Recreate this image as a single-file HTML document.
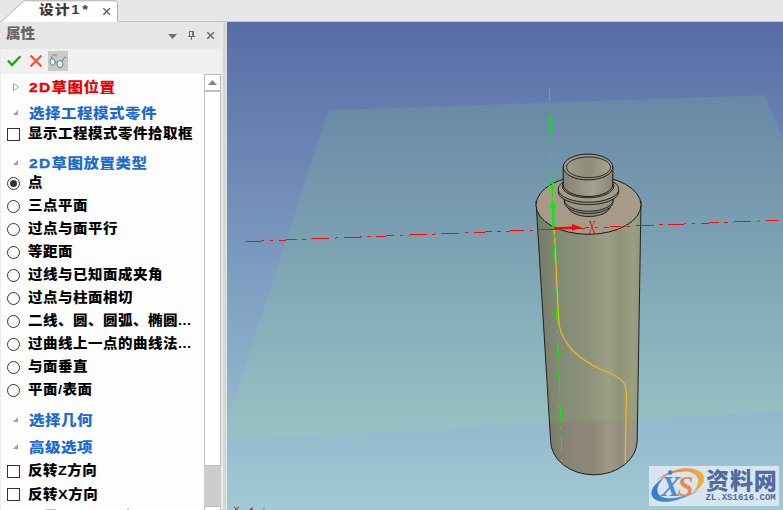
<!DOCTYPE html>
<html lang="zh-CN">
<head>
<meta charset="utf-8">
<title>设计1</title>
<style>
html,body{margin:0;padding:0;}
html{width:783px;height:510px;overflow:hidden;}
body{width:783px;height:510px;overflow:hidden;background:#e6e6e6;position:relative;
 font-family:"Liberation Sans","Noto Sans CJK SC",sans-serif;font-size:15px;font-weight:900;color:#000;}
div,span{position:absolute;box-sizing:border-box;white-space:nowrap;}
#topbar{left:0;top:0;width:783px;height:22px;background:#e7e7e7;border-bottom:1px solid #c6c6c6;}
#tabtxt{left:38.8px;top:0px;height:21px;line-height:19.6px;font-size:12.8px;color:#3a3a3a;letter-spacing:0.9px;transform-origin:0 50%;transform:scaleX(1.15);}
#phead{left:0;top:22px;width:221px;height:27px;background:#e6e6e6;}
#ptitle{left:5.8px;top:21.3px;height:26px;line-height:25px;font-size:14px;color:#666;font-weight:900;transform-origin:0 50%;transform:scaleX(1.04);}
#tool{left:0;top:49px;width:221px;height:25px;background:#f0f0f0;}
#glassbg{left:48px;top:51px;width:20px;height:20px;background:#c9c9c9;}
#tree{left:1px;top:74px;width:203px;height:436px;background:#fff;overflow:hidden;}
#leftedge{left:0;top:49px;width:1px;height:461px;background:#ececec;}
.row{left:0;width:203px;height:23px;line-height:22px;}
.row::before{content:"";position:absolute;left:1px;top:1px;width:196px;height:21px;background:#fdfdfe;}
.row .t{left:27.3px;top:0px;font-size:13.4px;transform-origin:0 50%;transform:scaleX(1.08);letter-spacing:0.49px;}
.hd .t{left:28.2px;top:0.5px;transform:scaleX(1.157);letter-spacing:0.43px;}
.la{position:static;letter-spacing:1.2px;-webkit-text-stroke:0.4px currentColor;}
.red{color:#f00000;}
.blue{color:#1c6ad4;}
.cb{left:6px;top:5px;width:13px;height:13px;border:1px solid #333;background:#fff;}
.rb{left:6px;top:5px;width:13px;height:13px;border:1px solid #333;border-radius:50%;background:#fff;}
.rb.on::after{content:"";position:absolute;left:2px;top:2px;width:7px;height:7px;border-radius:50%;background:#333;}
#sb{left:204px;top:74px;width:17px;height:436px;background:#cdcdcd;overflow:hidden;}
#sbup{left:0;top:0;width:17px;height:17px;background:#fff;border:1px solid #bdbdbd;}
#sbthumb{left:0;top:17px;width:17px;height:375px;background:#fff;border:1px solid #bdbdbd;}
#sbdn{left:0;top:432px;width:17px;height:18px;background:#fff;border:1px solid #bdbdbd;}
#split{left:221px;top:22px;width:6px;height:488px;background:linear-gradient(to right,#eaeaea 0,#eaeaea 2px,#d6d6d6 2.5px,#d6d6d6 4.7px,#e2e2e2 5.2px,#e2e2e2 6px);}
#view{left:227px;top:22px;width:556px;height:488px;overflow:hidden;background:#5a6ea6;}
svg{position:absolute;left:0;top:0;}
#wm{left:649px;top:466px;width:129.500px;height:39.500px;background:#d6e6ee;overflow:hidden;}
#wmcn{left:57px;top:1px;font-size:23px;line-height:28px;color:#526a9c;font-weight:900;letter-spacing:0.9px;}
#wmen{left:56.500px;top:26.700px;font-family:"Liberation Mono",monospace;font-size:9px;line-height:10px;color:#526a9c;font-weight:700;}
</style>
</head>
<body>
<div id="topbar"></div>
<svg width="783" height="510" viewBox="0 0 783 510" style="z-index:1;pointer-events:none">
  <path d="M1.5 21.5 L24 0.8 H115 Q117.5 0.8 117.5 3.5 V21.5" fill="#fff" stroke="#b0b0b0" stroke-width="1"/>
  <rect x="2" y="21" width="115" height="1" fill="#fff"/>
  <path d="M103.400 8.300 L109.900 14.800 M109.900 8.300 L103.400 14.800" stroke="#666" stroke-width="1.600" fill="none"/>
</svg>
<div id="tabtxt" style="z-index:2">设计<span style="position:static;margin-left:0.7px;letter-spacing:2.3px">1*</span></div>

<div id="phead"></div>
<div id="ptitle">属性</div>
<div id="tool"></div>
<div id="glassbg"></div>
<div id="leftedge"></div>
<svg width="221" height="80" viewBox="0 0 221 80" style="z-index:2">
  <path d="M168 34 H177 L172.5 39 Z" fill="#6e6e6e"/>
  <path d="M189 31.500 H194 M189.500 31.500 V36.500 M188 36.500 H195.200 M191.500 36.500 V40" stroke="#6e6e6e" stroke-width="1.100" fill="none"/>
  <path d="M193.100 31 V36.500" stroke="#6e6e6e" stroke-width="1.900" fill="none"/>
  <path d="M207.300 32.200 L213.900 38.800 M213.900 32.200 L207.300 38.800" stroke="#6e6e6e" stroke-width="1.600" fill="none"/>
  <path d="M8 60.600 L12 65 L20.300 56.300" stroke="#1aa51a" stroke-width="2.300" fill="none"/>
  <path d="M30.500 55.500 L41.500 66.500 M41.500 55.500 L30.500 66.500" stroke="#f6502c" stroke-width="2.100" fill="none"/>
  <g stroke="#66787a" stroke-width="0.9" fill="#e2f8f8">
    <ellipse cx="52.600" cy="62" rx="2.500" ry="3.300" transform="rotate(-15 52.600 62)"/>
    <ellipse cx="60" cy="64" rx="2.900" ry="3.600" transform="rotate(-15 60 64)"/>
    <path d="M50.700 59.500 Q52.500 54 55.700 54.800 Q56.500 55.300 56 56.500 M62.500 61.500 Q63 57.500 65 57 Q66 57 65.800 58.500 M55 62 Q56.300 61.200 57.200 62.500" fill="none"/>
  </g>
</svg>

<div id="tree">
  <div class="row hd" style="top:2px"><span class="t red"><span class="la">2D</span>草图位置</span></div>
  <div class="row hd" style="top:28px"><span class="t blue">选择工程模式零件</span></div>
  <div class="row" style="top:49px"><span class="cb"></span><span class="t">显示工程模式零件拾取框</span></div>
  <div class="row hd" style="top:78px"><span class="t blue"><span class="la">2D</span>草图放置类型</span></div>
  <div class="row" style="top:98px"><span class="rb on"></span><span class="t">点</span></div>
  <div class="row" style="top:121px"><span class="rb"></span><span class="t">三点平面</span></div>
  <div class="row" style="top:144px"><span class="rb"></span><span class="t">过点与面平行</span></div>
  <div class="row" style="top:167px"><span class="rb"></span><span class="t">等距面</span></div>
  <div class="row" style="top:190px"><span class="rb"></span><span class="t">过线与已知面成夹角</span></div>
  <div class="row" style="top:213px"><span class="rb"></span><span class="t">过点与柱面相切</span></div>
  <div class="row" style="top:236px"><span class="rb"></span><span class="t">二线、圆、圆弧、椭圆...</span></div>
  <div class="row" style="top:259px"><span class="rb"></span><span class="t">过曲线上一点的曲线法...</span></div>
  <div class="row" style="top:282px"><span class="rb"></span><span class="t">与面垂直</span></div>
  <div class="row" style="top:305px"><span class="rb"></span><span class="t">平面/表面</span></div>
  <div class="row hd" style="top:335px"><span class="t blue">选择几何</span></div>
  <div class="row hd" style="top:362px"><span class="t blue">高级选项</span></div>
  <div class="row" style="top:386px"><span class="cb"></span><span class="t">反转Z方向</span></div>
  <div class="row" style="top:409px"><span class="cb"></span><span class="t" style="top:0.6px">反转X方向</span></div>
  <svg width="203" height="436" viewBox="0 0 203 436">
    <path d="M12.500 9.500 L17.500 13 L12.500 16.500 Z" fill="#fff" stroke="#a6a6a6" stroke-width="1"/>
    <path d="M17 36 V41 H12 Z" fill="#a0a0a0"/>
    <path d="M17 86 V91 H12 Z" fill="#a0a0a0"/>
    <path d="M17 343 V348 H12 Z" fill="#a0a0a0"/>
    <path d="M17 370 V375 H12 Z" fill="#a0a0a0"/>
    <rect x="45" y="435" width="10" height="1" fill="#c4c4c4"/>
    <rect x="126" y="435" width="2" height="1" fill="#e8a0a0"/>
  </svg>
</div>

<div id="sb">
  <div id="sbthumb"></div>
  <div id="sbup"></div>
  <div id="sbdn"></div>
  <svg width="17" height="436" viewBox="0 0 17 436"><path d="M4 11 L8.500 6 L13 11 Z" fill="#868686"/></svg>
</div>
<div id="split"></div>

<div id="view">
<svg width="556" height="488" viewBox="227 22 556 488">
  <defs>
    <linearGradient id="bg" x1="0" y1="22" x2="0" y2="510" gradientUnits="userSpaceOnUse">
      <stop offset="0" stop-color="#586ca6"/>
      <stop offset="0.5" stop-color="#7c9cc0"/>
      <stop offset="1" stop-color="#a1cad4"/>
    </linearGradient>
    <linearGradient id="pl" x1="0" y1="95" x2="0" y2="440" gradientUnits="userSpaceOnUse">
      <stop offset="0" stop-color="#6888a6"/>
      <stop offset="1" stop-color="#98c3c5"/>
    </linearGradient>
    <linearGradient id="body" x1="536" y1="0" x2="641" y2="0" gradientUnits="userSpaceOnUse">
      <stop offset="0" stop-color="#747c68"/>
      <stop offset="0.25" stop-color="#848c76"/>
      <stop offset="0.5" stop-color="#8c927a"/>
      <stop offset="0.68" stop-color="#9b9f85"/>
      <stop offset="0.8" stop-color="#909478"/>
      <stop offset="0.92" stop-color="#9c9e82"/>
      <stop offset="1" stop-color="#94967a"/>
    </linearGradient>
    <linearGradient id="body2" x1="550" y1="0" x2="638" y2="0" gradientUnits="userSpaceOnUse">
      <stop offset="0" stop-color="#7a7c6c"/>
      <stop offset="0.25" stop-color="#8a8578"/>
      <stop offset="0.5" stop-color="#8e8878"/>
      <stop offset="0.68" stop-color="#a09886"/>
      <stop offset="0.8" stop-color="#948c7c"/>
      <stop offset="0.92" stop-color="#a09884"/>
      <stop offset="1" stop-color="#989080"/>
    </linearGradient>
    <linearGradient id="neck" x1="563" y1="0" x2="613" y2="0" gradientUnits="userSpaceOnUse">
      <stop offset="0" stop-color="#848274"/>
      <stop offset="0.6" stop-color="#a4a08e"/>
      <stop offset="1" stop-color="#8a8878"/>
    </linearGradient>
    <linearGradient id="inner" x1="566" y1="0" x2="610" y2="0" gradientUnits="userSpaceOnUse">
      <stop offset="0" stop-color="#a09c88"/>
      <stop offset="0.5" stop-color="#8e8c7a"/>
      <stop offset="1" stop-color="#a8a490"/>
    </linearGradient>
    <clipPath id="below"><path d="M227 439.700 L783 411.300 V510 H227 Z"/></clipPath>
  </defs>
  <rect x="227" y="22" width="556" height="488" fill="url(#bg)"/>
  <path d="M328.600 110.200 L764.400 95.300 L783 138.800 V411.300 L227 439.700 V422 Z" fill="url(#pl)"/>

  <!-- bottle body -->
  <path id="bodyp" d="M536 201 L550.600 440.600 A43.300 34.200 0 0 0 637.200 440.600 L641 201 Z" fill="url(#body)"/>
  <path d="M536 201 L550.600 440.600 A43.300 34.200 0 0 0 637.200 440.600 L641 201 Z" fill="url(#body2)" clip-path="url(#below)"/>
  <path d="M536 201 L550.600 440.600 A43.300 34.200 0 0 0 637.200 440.600 L641 201" fill="none" stroke="#202020" stroke-width="1"/>
  <!-- shoulder -->
  <ellipse cx="588.500" cy="205" rx="52.500" ry="29.300" fill="#a69b89" stroke="#1a1a1a" stroke-width="1"/>
  <!-- neck rings -->
  <ellipse cx="589" cy="205.500" rx="21.500" ry="11" fill="#8e8976" stroke="#1a1a1a" stroke-width="0.9"/>
  <ellipse cx="588.700" cy="201.500" rx="24.500" ry="12" fill="#8a8674" stroke="#1a1a1a" stroke-width="0.9"/>
  <ellipse cx="588.700" cy="199.300" rx="24.500" ry="12" fill="#9a9582" stroke="#1a1a1a" stroke-width="0.9"/>
  <ellipse cx="588.500" cy="191.700" rx="30.300" ry="13" fill="#8e8a78" stroke="#1a1a1a" stroke-width="0.9"/>
  <ellipse cx="588.500" cy="189.200" rx="30.300" ry="13" fill="#a29c88" stroke="#1a1a1a" stroke-width="0.9"/>
  <ellipse cx="588" cy="186" rx="25.800" ry="11.800" fill="#8c8876" stroke="#1a1a1a" stroke-width="0.9"/>
  <path d="M563.200 166.500 V184.500 A24.800 12 0 0 0 612.800 184.500 V166.500 Z" fill="url(#neck)" stroke="#1a1a1a" stroke-width="1"/>
  <ellipse cx="588" cy="167" rx="24.800" ry="12.900" fill="#a09a86" stroke="#1a1a1a" stroke-width="1"/>
  <ellipse cx="588.500" cy="167.300" rx="22" ry="10.400" fill="url(#inner)" stroke="#1a1a1a" stroke-width="0.9"/>

  <!-- orange curve -->
  <path d="M554.200 229 L557.600 297 Q558.400 318 559.200 325 Q561.400 338 573 351 Q585 362 601 369.500 Q618 375.500 624 383 Q626.600 388 626.400 396 L625.200 463" fill="none" stroke="#f2b822" stroke-width="1.250"/>
  <!-- red axis line -->
  <line x1="246.300" y1="241.600" x2="779" y2="220.200" stroke="#ff0808" stroke-width="1" stroke-dasharray="18 5.500 3.500 5.500" shape-rendering="crispEdges"/>
  <!-- green axis line -->
  <line x1="549.100" y1="88.500" x2="561.900" y2="462" stroke="#10e810" stroke-width="1.100" stroke-dasharray="17 6 3 6" stroke-dashoffset="4" shape-rendering="crispEdges"/>
  <!-- Y arrow -->
  <line x1="553.600" y1="229" x2="553" y2="205" stroke="#0cec0c" stroke-width="2.400"/>
  <path d="M553 198.800 L549.800 208.500 H556.200 Z" fill="#0cec0c"/>
  <text transform="translate(547 195.600) scale(0.63 1)" font-family="Liberation Serif, serif" font-size="19" font-weight="400" fill="#14e014">Y</text>
  <!-- X arrow -->
  <line x1="539" y1="229.700" x2="554" y2="229.100" stroke="#ff0808" stroke-width="1" shape-rendering="crispEdges"/>
  <line x1="554" y1="228.500" x2="573" y2="227.700" stroke="#f80808" stroke-width="2.500"/>
  <path d="M581.800 227.400 L572 224 V230.800 Z" fill="#f80808"/>
  <text transform="translate(588.200 233.600) scale(0.58 1)" font-family="Liberation Serif, serif" font-size="19" font-weight="400" fill="#f41414">X</text>
  <!-- small triad at bottom-left -->
  <path d="M234 507 L239 511 M239 507 L234 511" stroke="#e01010" stroke-width="1"/>
  <path d="M249 510 L252.500 507 V510 Z" fill="#c01818"/>
  <path d="M262 510 L264.500 507.500 V510 Z" fill="#8a8a8a"/>
</svg>
</div>

<div id="wm">
  <svg width="130" height="40" viewBox="0 0 130 40">
    <defs>
      <linearGradient id="sw1" x1="0" y1="0" x2="1" y2="0"><stop offset="0" stop-color="#3a78c8"/><stop offset="1" stop-color="#58a0e0"/></linearGradient>
      <linearGradient id="sw2" x1="0" y1="0" x2="1" y2="0"><stop offset="0" stop-color="#e86848"/><stop offset="1" stop-color="#f0b040"/></linearGradient>
    </defs>
    <path d="M18.500 9 C8 15 0 24 3 30 C6 36 16 37.500 28 34 C38 31 46 27 51 23.500 C42 28 32 31.500 24 32 C14 33 9 30 8.500 25 C8 19 12 14 18.500 9 Z" fill="url(#sw1)"/>
    <path d="M8 14 C16 7 28 2 38 2.200 C48 2.500 55 6 55.200 12 C55.500 18 50 23 43 27.500 C47 23 50 17 49 13 C47.500 8 42 5.500 36 5.500 C26 5.500 16 9 8 14 Z" fill="url(#sw2)"/>
    <circle cx="21.200" cy="6.600" r="2.300" fill="#4a80c8"/>
    <text x="12" y="30" font-family="Liberation Serif, serif" font-style="italic" font-size="29" fill="#5688cc">X</text>
    <text x="28.500" y="30" font-family="Liberation Serif, serif" font-style="italic" font-size="29" fill="#ee8850">S</text>
  </svg>
  <div id="wmcn">资料网</div>
  <div id="wmen">ZL.XS1616.COM</div>
</div>
</body>
</html>
